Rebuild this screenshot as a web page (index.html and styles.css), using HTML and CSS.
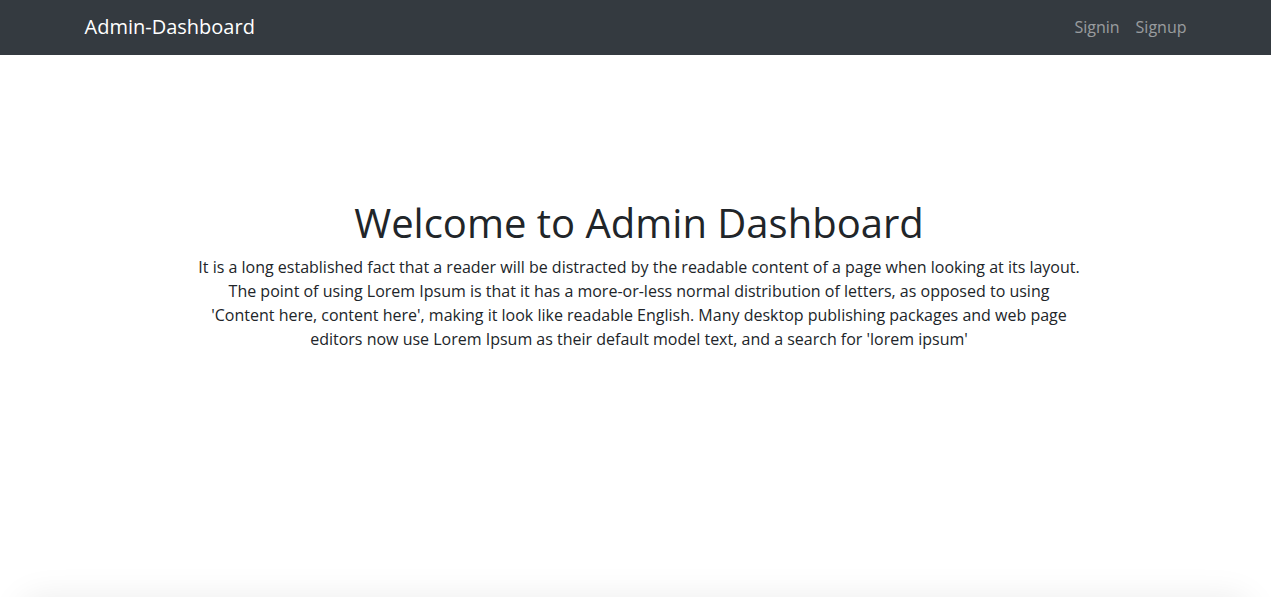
FILE: index.html
```html
<!DOCTYPE html>
<html lang="en">
<head>
<meta charset="utf-8">
<title>Admin-Dashboard</title>
<link rel="stylesheet" href="styles.css">
</head>
<body>
<nav class="navbar">
  <div class="nav-inner">
    <a class="brand" href="#">Admin-Dashboard</a>
    <ul class="nav-links">
      <li><a class="nav-link" href="#">Signin</a></li>
      <li><a class="nav-link" href="#">Signup</a></li>
    </ul>
  </div>
</nav>
<main class="hero">
  <h1 class="hero-title">Welcome to Admin Dashboard</h1>
  <p class="hero-text">It is a long established fact that a reader will be distracted by the readable content of a page when looking at its layout. The point of using Lorem Ipsum is that it has a more-or-less normal distribution of letters, as opposed to using 'Content here, content here', making it look like readable English. Many desktop publishing packages and web page editors now use Lorem Ipsum as their default model text, and a search for 'lorem ipsum'</p>
</main>
<footer class="footer"></footer>
</body>
</html>
```

FILE: styles.css
```css
* { box-sizing: border-box; }
html, body { margin: 0; padding: 0; }
body {
  font-family: "Open Sans", "Liberation Sans", sans-serif;
  font-size: 16px;
  line-height: 1.5;
  color: #212529;
  background: #fff;
}
.navbar {
  background: #343a40;
  height: 55px;
  padding-bottom: 2px;
  display: flex;
  align-items: center;
}
.nav-inner {
  width: 1140px;
  margin: 0 auto;
  padding: 0 11px 0 19px;
  display: flex;
  align-items: center;
  justify-content: space-between;
}
.brand {
  color: #fff;
  text-decoration: none;
  font-size: 20px;
  line-height: 30px;
}
.nav-links {
  list-style: none;
  margin: 0;
  padding: 0;
  display: flex;
}
.nav-link {
  display: block;
  padding: 8px;
  color: rgba(255, 255, 255, 0.5);
  text-decoration: none;
  font-size: 16px;
}
.hero {
  height: 542px;
  padding: 144px 0 0 7px;
  text-align: center;
}
.hero-title {
  margin: 0 0 8px;
  font-size: 40px;
  font-weight: 400;
  line-height: 1.2;
}
.hero-text {
  max-width: 885px;
  margin: 0 auto;
}
.footer {
  height: 60px;
  margin: 0 20px;
  border-radius: 20px;
  box-shadow: 0 0 34px rgba(0, 0, 0, 0.08);
}
```
